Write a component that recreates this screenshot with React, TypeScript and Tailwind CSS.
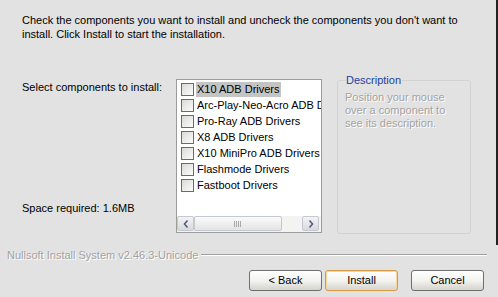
import React from "react";

const items = [
  "X10 ADB Drivers",
  "Arc-Play-Neo-Acro ADB Drivers",
  "Pro-Ray ADB Drivers",
  "X8 ADB Drivers",
  "X10 MiniPro ADB Drivers",
  "Flashmode Drivers",
  "Fastboot Drivers",
];

function Checkbox() {
  return (
    <span className="w-[13px] h-[13px] shrink-0 border border-[#4d7878] bg-gradient-to-br from-[#dcdcd6] to-[#fbfbf9]" />
  );
}

function Button({ label, primary }: { label: string; primary?: boolean }) {
  return (
    <div
      className={`h-[21px] flex items-center justify-center rounded-[3px] border bg-gradient-to-b from-white via-[#f3f3f0] to-[#d6d3cb] text-black ${
        primary ? "border-[#d69a43] shadow-[inset_0_0_0_1px_#f8d79b]" : "border-[#6f6f6f]"
      } w-[73px]`}
    >
      {label}
    </div>
  );
}

function ScrollArrow({ dir }: { dir: "left" | "right" }) {
  return (
    <div className="w-[17px] h-[15px] shrink-0 flex items-center justify-center border border-[#c3c9d2] rounded-[2px] bg-gradient-to-b from-[#f4f4f4] to-[#d9d9d9]">
      <svg width="6" height="8" viewBox="0 0 6 8">
        {dir === "left" ? (
          <path d="M4.5 0.5 L1.5 4 L4.5 7.5" fill="none" stroke="#4d6185" strokeWidth="1.6" />
        ) : (
          <path d="M1.5 0.5 L4.5 4 L1.5 7.5" fill="none" stroke="#4d6185" strokeWidth="1.6" />
        )}
      </svg>
    </div>
  );
}

export default function App() {
  return (
    <div className="w-[498px] h-[297px] overflow-hidden bg-[#e2e2e2] flex font-['Liberation_Sans',Arial,sans-serif] text-[11px] text-black">
      <div className="w-[496px] flex flex-col">
        <p className="pt-[13px] pl-[22px] leading-[14px]">
          Check the components you want to install and uncheck the components you don't want to
          <br />
          install. Click Install to start the installation.
        </p>

        <div className="mt-[38px] flex">
          <div className="w-[176px] pl-[22px] h-[154px] flex flex-col justify-between whitespace-nowrap">
            <span className="mt-[1px] leading-[14px]">Select components to install:</span>
            <span className="mb-[18px] leading-[14px]">Space required: 1.6MB</span>
          </div>

          <div className="w-[146px] h-[154px] border border-[#9c9c9c] bg-white flex flex-col overflow-hidden">
            <div className="flex-1 pt-[1px] pl-[4px] flex flex-col overflow-hidden">
              {items.map((item, i) => (
                <div key={item} className="h-[16px] flex items-center gap-[2px] whitespace-nowrap">
                  <Checkbox />
                  <span className={`px-[1px] leading-[15px] ${i === 0 ? "bg-[#c4c4c4]" : ""}`}>{item}</span>
                </div>
              ))}
            </div>
            <div className="h-[16px] flex items-start bg-[#f3f3f1]">
              <ScrollArrow dir="left" />
              <div className="w-[88px] h-[15px] border border-[#c3c9d2] rounded-[2px] bg-gradient-to-b from-[#fafafa] to-[#e4e4e4] flex items-center justify-center">
                <svg width="8" height="6" viewBox="0 0 8 6">
                  <path d="M0.5 0 V6 M2.5 0 V6 M4.5 0 V6 M6.5 0 V6" stroke="#a8a8a8" strokeWidth="1" />
                </svg>
              </div>
              <div className="flex-1" />
              <ScrollArrow dir="right" />
              <div className="w-[2px]" />
            </div>
          </div>

          <div className="ml-[15px] w-[134px] h-[154px] mt-[1px] border border-[#d2d2d2] rounded-[3px] relative">
            <span className="absolute left-[7px] -top-[8px] px-[1px] bg-[#e2e2e2] leading-[14px] text-[#1d3f9e]">
              Description
            </span>
            <div className="pt-[10px] pl-[7px] leading-[13px] text-[#a3a3a3] [text-shadow:1px_1px_0_#fff]">
              <div>Position your mouse</div>
              <div>over a component to</div>
              <div>see its description.</div>
            </div>
          </div>
        </div>

        <div className="mt-[14px] pl-[7px] pr-[9px] flex items-center gap-[3px]">
          <span className="leading-[14px] text-[#a3a3a3] [text-shadow:1px_1px_0_#fff] whitespace-nowrap">
            Nullsoft Install System v2.46.3-Unicode
          </span>
          <div className="flex-1 h-[2px] border-t border-[#a0a0a0] border-b border-b-white" />
        </div>

        <div className="mt-[8px] pl-[249px] flex">
          <Button label="< Back" />
          <div className="w-[3px]" />
          <Button label="Install" primary />
          <div className="w-[13px]" />
          <Button label="Cancel" />
        </div>
      </div>
      <div className="w-[2px] h-[245px] bg-[#222]" />
    </div>
  );
}
